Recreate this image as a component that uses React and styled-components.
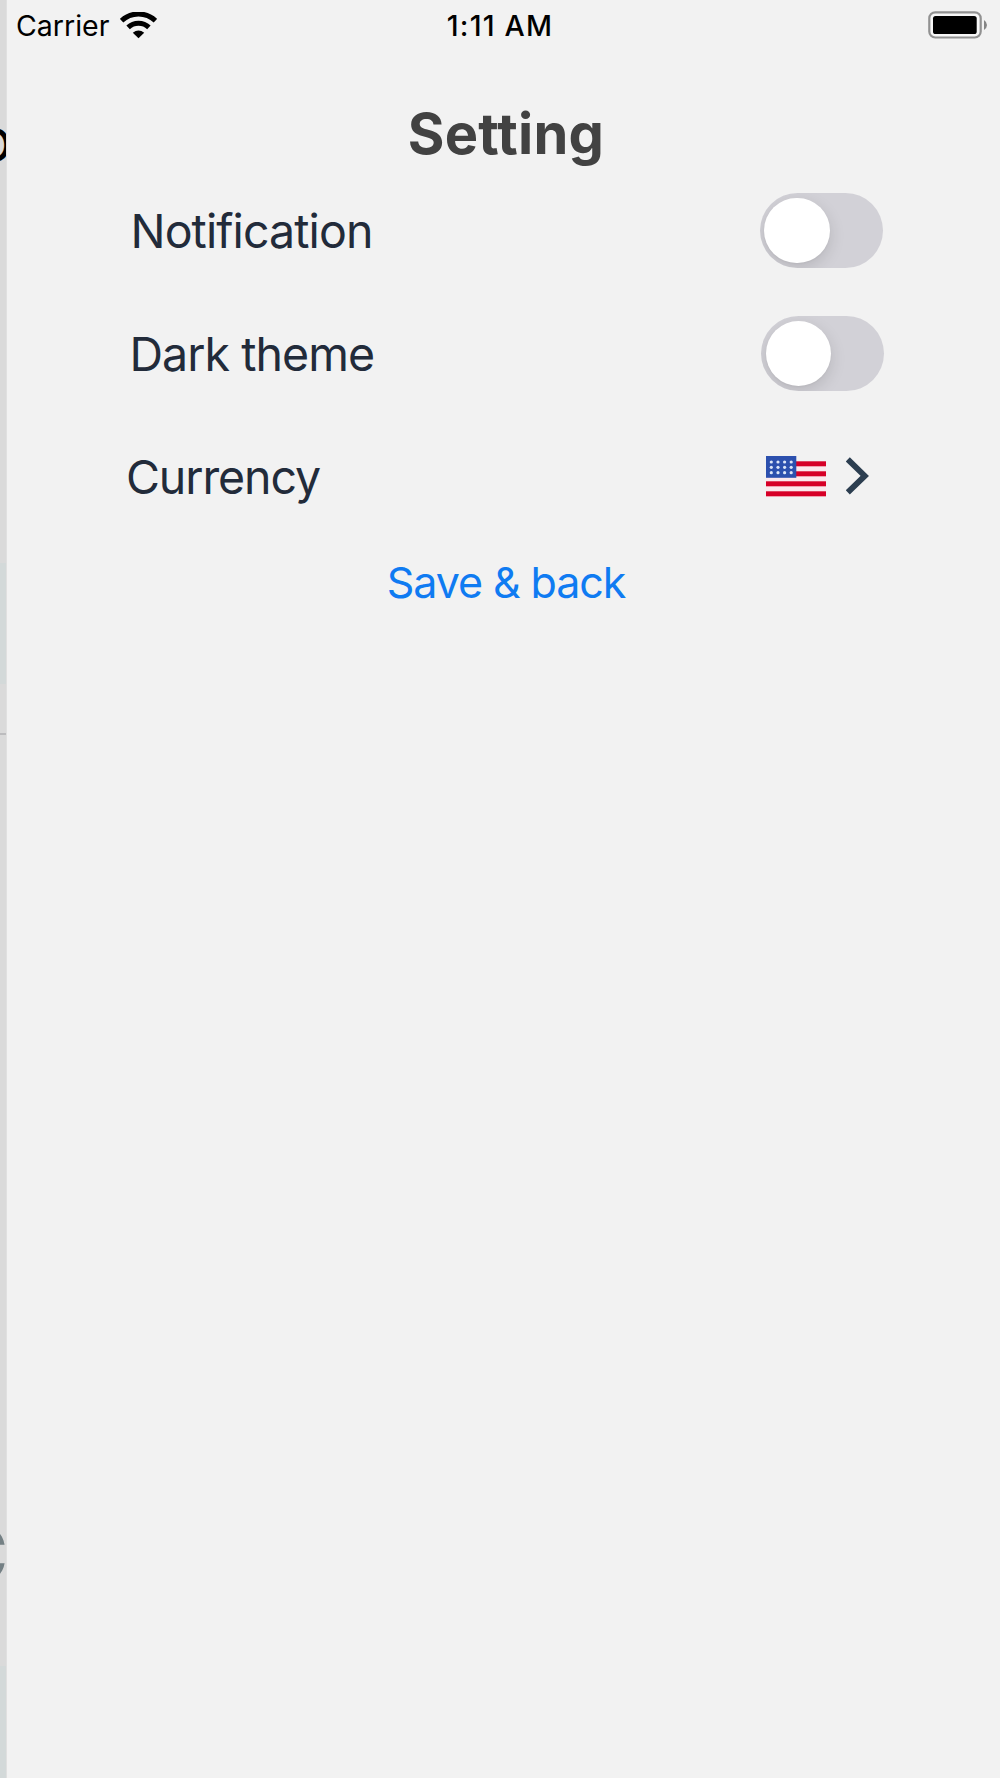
import React, { useState } from "react";
import styled, { createGlobalStyle } from "styled-components";

const GlobalStyle = createGlobalStyle`
  html, body { margin: 0; padding: 0; background: #f2f2f2; }
  *, *::before, *::after { box-sizing: border-box; }
  button { appearance: none; border: 0; padding: 0; background: none; font: inherit; color: inherit; cursor: pointer; }
`;

const Phone = styled.div`
  display: flex;
  width: 1000px;
  height: 1778px;
  overflow: hidden;
  background: #f2f2f2;
  font-family: Inter, "Liberation Sans", sans-serif;
`;

const Peek = styled.aside`
  flex: none;
  width: 7px;
  height: 100%;
  overflow: hidden;
  background: #dadada;
  border-right: 1px solid #e0e0e0;
`;

const PeekBand = styled.div`
  display: flex;
  justify-content: flex-end;
  height: ${(p) => p.$height}px;
  background: ${(p) => p.$fill || "transparent"};
`;

const PeekLetter = styled.span`
  flex: none;
  margin-top: ${(p) => p.$top}px;
  margin-right: ${(p) => p.$shift}px;
  font-size: ${(p) => p.$size}px;
  line-height: 60px;
  height: 60px;
  font-weight: ${(p) => p.$weight};
  color: ${(p) => p.$color};
`;

const Screen = styled.main`
  flex: 1;
  display: flex;
  flex-direction: column;
`;

const StatusBar = styled.header`
  display: grid;
  grid-template-columns: 1fr auto 1fr;
  align-items: center;
  height: 50px;
  padding: 0 12px 0 9px;
`;

const Carrier = styled.div`
  display: flex;
  align-items: center;
  gap: 11px;
  padding-top: 1px;
  font-size: 28.5px;
  line-height: 49px;
`;

const Clock = styled.time`
  padding: 1px 4px 0 0;
  font-size: 28.5px;
  line-height: 49px;
  font-weight: 500;
  letter-spacing: 1.2px;
`;

const StatusRight = styled.div`
  display: flex;
  justify-content: flex-end;
  padding-bottom: 1px;
`;

const Title = styled.h1`
  margin: 51px 0 0;
  padding-left: 5px;
  height: 66px;
  line-height: 66px;
  text-align: center;
  font-size: 56px;
  font-weight: 700;
  letter-spacing: 0.3px;
  color: #424242;
`;

const List = styled.section`
  display: flex;
  flex-direction: column;
  padding-top: 2px;
`;

const Row = styled.div`
  display: flex;
  align-items: center;
  justify-content: space-between;
  height: 123px;
  padding-left: ${(p) => p.$left}px;
  padding-right: ${(p) => p.$right}px;
`;

const Label = styled.span`
  font-size: 46.5px;
  line-height: 60px;
  letter-spacing: ${(p) => p.$tracking}px;
  white-space: nowrap;
  color: #222b3a;
`;

const Track = styled.button`
  display: flex;
  align-items: center;
  justify-content: ${(p) => (p.$on ? "flex-end" : "flex-start")};
  width: 123px;
  height: 75px;
  padding: 0 4.5px;
  overflow: hidden;
  border-radius: 38px;
  background: ${(p) => (p.$on ? "#34c759" : "#d2d1d7")};
`;

const Knob = styled.span`
  width: 65.5px;
  height: 65.5px;
  border-radius: 50%;
  background: #fff;
  box-shadow: 0 5px 16px rgba(0, 0, 0, 0.13), 0 1px 2px rgba(0, 0, 0, 0.04);
`;

const Picker = styled.button`
  display: flex;
  align-items: center;
  gap: 20px;
`;

const SaveButton = styled.button`
  align-self: center;
  margin-top: 14px;
  margin-left: 5px;
  height: 60px;
  line-height: 60px;
  font-size: 43px;
  letter-spacing: -1.1px;
  color: #0f7bf2;
`;

function WifiIcon() {
  return (
    <svg width="37" height="28" viewBox="0 0 37 28" fill="none">
      <path d="M1.6 8.7A24.5 24.5 0 0 1 35.4 8.7" stroke="#000" strokeWidth="5" />
      <path d="M8.1 15.4A15 15 0 0 1 28.9 15.4" stroke="#000" strokeWidth="5" />
      <path d="M12.8 20.7Q18.5 16.1 24.2 20.7L18.5 26.3Z" fill="#000" />
    </svg>
  );
}

function BatteryIcon() {
  return (
    <svg width="60" height="28" viewBox="0 0 60 28">
      <rect x="1.3" y="1.3" width="51.4" height="25.2" rx="6" fill="#f7f7f7" stroke="#919191" strokeWidth="2.2" />
      <rect x="5" y="5" width="43.7" height="18" rx="2.6" fill="#000" />
      <path d="M56 9Q59 11 59 14T56 19Z" fill="#858585" />
    </svg>
  );
}

function FlagIcon() {
  const stars = [];
  for (const y of [6, 11.3, 16.7]) for (const x of [5.3, 12, 18.6, 25.2]) stars.push([x, y]);
  return (
    <svg width="60" height="41" viewBox="0 0 60 41">
      <rect y="6" width="60" height="35" fill="#fbe8ec" />
      {[5, 15, 25, 35].map((y) => (
        <rect key={y} y={y + 0.3} width="60" height="5" fill="#d60027" />
      ))}
      <rect width="30.3" height="21.8" fill="#2c50ae" />
      {stars.map(([x, y]) => (
        <circle key={`${x}-${y}`} cx={x} cy={y} r="1.6" fill="#dce5f7" />
      ))}
    </svg>
  );
}

function ChevronIcon() {
  return (
    <svg width="24" height="40" viewBox="0 0 24 40" fill="none">
      <path d="M1.8 2.4L18.8 18.9L1.8 35.4" stroke="#2c3e50" strokeWidth="5.8" />
    </svg>
  );
}

function Toggle({ label }) {
  const [on, setOn] = useState(false);
  return (
    <Track role="switch" aria-label={label} aria-checked={on} $on={on} onClick={() => setOn(!on)}>
      <Knob />
    </Track>
  );
}

export default function App() {
  return (
    <Phone>
      <GlobalStyle />
      <Peek aria-hidden="true">
        <PeekBand $height={563}>
          <PeekLetter $top={115} $shift={-6} $size={46.5} $weight={500} $color="#000">O</PeekLetter>
        </PeekBand>
        <PeekBand $height={121} $fill="#d3d9d9" />
        <PeekBand $height={48.5} />
        <PeekBand $height={2.5} $fill="#bcbcbe" />
        <PeekBand $height={931}>
          <PeekLetter $top={789} $shift={-2} $size={74} $weight={600} $color="#748084">C</PeekLetter>
        </PeekBand>
        <PeekBand $height={112} $fill="#d3d9d9" />
      </Peek>
      <Screen>
        <StatusBar>
          <Carrier>
            Carrier
            <WifiIcon />
          </Carrier>
          <Clock>1:11 AM</Clock>
          <StatusRight>
            <BatteryIcon />
          </StatusRight>
        </StatusBar>
        <Title>Setting</Title>
        <List>
          <Row $left={123.5} $right={117.5}>
            <Label $tracking={-0.9}>Notification</Label>
            <Toggle label="Notification" />
          </Row>
          <Row $left={122.5} $right={116}>
            <Label $tracking={-0.95}>Dark theme</Label>
            <Toggle label="Dark theme" />
          </Row>
          <Row $left={119} $right={130}>
            <Label $tracking={-1.1}>Currency</Label>
            <Picker aria-label="Choose currency">
              <FlagIcon />
              <ChevronIcon />
            </Picker>
          </Row>
        </List>
        <SaveButton>Save &amp; back</SaveButton>
      </Screen>
    </Phone>
  );
}
